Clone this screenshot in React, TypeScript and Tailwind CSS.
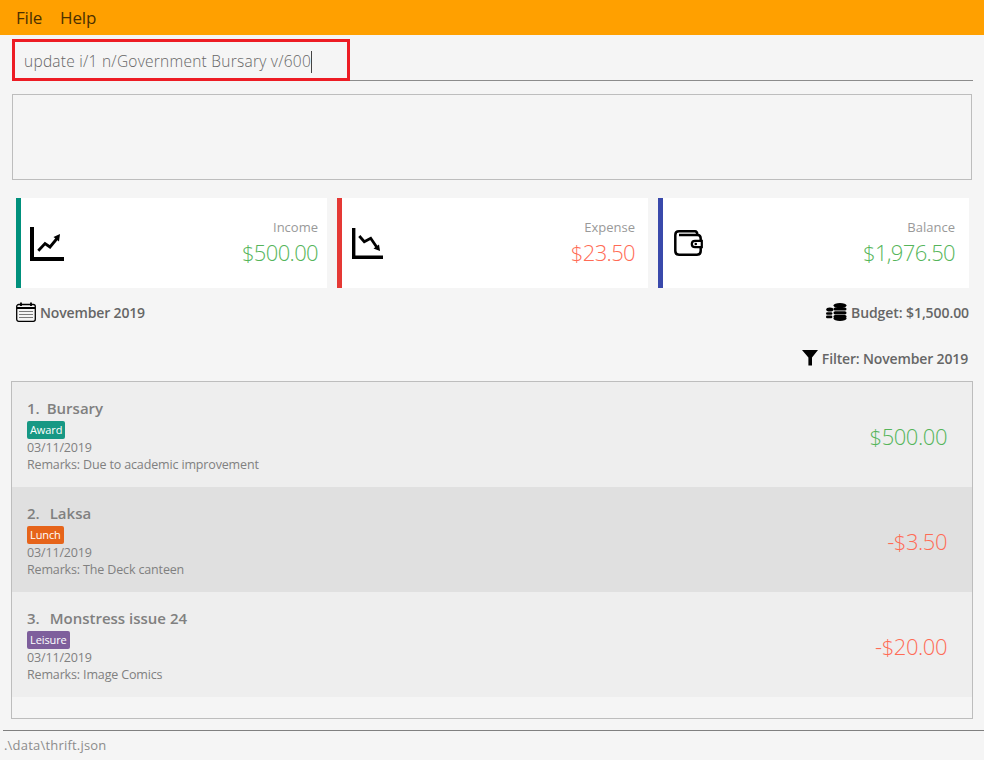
import React from "react";

const font = { fontFamily: '"Open Sans", "Noto Sans", sans-serif' };

function Up() {
  return (
    <svg width="34" height="34" viewBox="0 0 34 34" className="block">
      <path d="M2 0V32H34" fill="none" stroke="#000" strokeWidth="4" />
      <path d="M8.3 23.7L15 16.5L20 20L27 11.5" fill="none" stroke="#000" strokeWidth="2.8" />
      <path d="M23.5 10L30 7L29 14.5Z" fill="#000" />
    </svg>
  );
}
function Down() {
  return (
    <svg width="31" height="31" viewBox="0 0 31 31" className="block">
      <path d="M1.7 0V29.3H31" fill="none" stroke="#000" strokeWidth="3.4" />
      <path d="M7.3 8L12.3 13.7L18.7 10.3L25 19.5" fill="none" stroke="#000" strokeWidth="2.8" />
      <path d="M21.5 20.5L28 23L27 16.5Z" fill="#000" />
    </svg>
  );
}
function Wallet() {
  return (
    <svg width="29" height="26" viewBox="0 0 29 26" className="block">
      <path d="M5 1.3H21C22.5 1.3 23.3 2.5 23.5 5M5 1.3C2.5 1.3 1.3 3 1.3 5V21C1.3 23.5 2.5 24.7 5 24.7H23C25.5 24.7 26.7 23.5 26.7 21V8.5C26.7 6 25.5 5 23.5 5H5" fill="none" stroke="#000" strokeWidth="2.5" />
      <path d="M27.8 10.8H21C19 10.8 17.8 12.3 17.8 14S19 17.2 21 17.2H27.8Z" fill="#fff" stroke="#000" strokeWidth="2.2" />
      <circle cx="21.8" cy="14" r="1.3" fill="#000" />
    </svg>
  );
}
function Calendar() {
  return (
    <svg width="20" height="20" viewBox="0 0 20 20" className="block">
      <rect x="0.7" y="2.5" width="18.6" height="16.8" rx="2" fill="none" stroke="#000" strokeWidth="1.3" />
      <path d="M1 6H19" stroke="#000" strokeWidth="2" />
      <path d="M5 0.5V4M15 0.5V4" stroke="#000" strokeWidth="1.8" />
      <path d="M3.5 9.5H16.5M3.5 12.5H16.5M3.5 15.5H16.5" stroke="#000" strokeWidth="1" strokeDasharray="1 1" />
    </svg>
  );
}
function Coins() {
  return (
    <svg width="21" height="18" viewBox="0 0 21 18" className="block">
      <g fill="#000">
        <ellipse cx="14" cy="2.6" rx="6.5" ry="2.6" />
        <rect x="7.5" y="4.4" width="13" height="3.2" rx="1.6" />
        <rect x="7.5" y="8.2" width="13" height="3.2" rx="1.6" />
        <rect x="7.5" y="12" width="13" height="3" rx="1.5" />
        <ellipse cx="14" cy="15.4" rx="6.5" ry="2.6" />
        <ellipse cx="3.8" cy="6.4" rx="3.6" ry="2" />
        <rect x="0" y="9.2" width="6.4" height="2.6" rx="1.3" />
        <rect x="0" y="12.6" width="6.4" height="2.6" rx="1.3" />
      </g>
    </svg>
  );
}
function Funnel() {
  return (
    <svg width="16" height="16" viewBox="0 0 16 16" className="block">
      <path d="M0 0H16L10 7.5V15.5H6.4V7.5Z" fill="#000" />
    </svg>
  );
}

function Card({ border, pad, iconPad, icon, label, value, color }: { border: string; pad: string; iconPad: string; icon: React.ReactNode; label: string; value: string; color: string }) {
  return (
    <div className={`flex h-[90px] w-[311px] items-center justify-between border-l-[5px] bg-white ${border} ${pad}`}>
      <div className={iconPad}>{icon}</div>
      <div className="flex flex-col items-end">
        <div className="mb-[2px] text-[13px] leading-[16px] text-[#999999]">{label}</div>
        <div className={`text-[22px] font-light leading-[30px] tracking-[-0.65px] ${color}`}>{value}</div>
      </div>
    </div>
  );
}

function Item({ n, gap, name, tag, tagColor, remarks, value, color, bg }: { n: string; gap: string; name: string; tag: string; tagColor: string; remarks: string; value: string; color: string; bg: string }) {
  return (
    <div className={`flex h-[105px] items-center justify-between pl-[15px] pr-[25px] ${bg}`}>
      <div className="flex flex-col pt-[2px]">
        <div className="flex text-[15px] font-semibold leading-[20px] text-[#808080]">
          <span className={gap}>{n}.</span>
          <span>{name}</span>
        </div>
        <div className={`mt-[3px] self-start rounded-[2px] px-[3px] text-[11px] leading-[18px] tracking-[-0.1px] text-white ${tagColor}`}>{tag}</div>
        <div className="text-[12.5px] leading-[17px] tracking-[-0.15px] text-[#808080]">03/11/2019</div>
        <div className="text-[12.5px] leading-[17px] tracking-[-0.15px] text-[#808080]">{remarks}</div>
      </div>
      <div className={`pt-[4px] text-[22px] font-light tracking-[-0.45px] ${color}`}>{value}</div>
    </div>
  );
}

export default function App() {
  return (
    <div className="relative flex h-[760px] w-[984px] flex-col overflow-hidden bg-[#f5f5f5]" style={font}>
      <div className="flex h-[35px] items-center gap-[18px] bg-[#ffa000] pl-[16px] text-[17px] tracking-[-0.2px] text-[#4d3000]">
        <span>File</span>
        <span>Help</span>
      </div>

      <div className="mx-[12px] mr-[11px] flex h-[46px] items-center border-b border-[#8c8c8c] pl-[12px] pt-[8px]">
        <span className="text-[15.5px] font-light tracking-[0.25px] text-[#666666]">update i/1 n/Government Bursary v/600</span>
        <span className="h-[22px] w-px bg-[#444]" />
      </div>
      <div className="pointer-events-none absolute left-[12px] top-[39px] h-[42px] w-[338px] border-[3px] border-[#ed1c24]" />

      <div className="ml-[12px] mt-[13px] h-[86px] w-[960px] border border-[#bdbdbd]" />

      <div className="ml-[16px] mt-[18px] flex gap-[10px]">
        <Card border="border-[#00907c]" pad="pl-[9px] pr-[9px]" iconPad="pt-[1px]" icon={<Up />} label="Income" value="$500.00" color="text-[#55b55a]" />
        <Card border="border-[#e53935]" pad="pl-[10px] pr-[13px]" iconPad="pt-[1px]" icon={<Down />} label="Expense" value="$23.50" color="text-[#ff6b55]" />
        <Card border="border-[#3949ab]" pad="pl-[11px] pr-[14px]" iconPad="" icon={<Wallet />} label="Balance" value="$1,976.50" color="text-[#55b55a]" />
      </div>

      <div className="ml-[16px] mr-[15px] mt-[13px] flex h-[22px] items-center justify-between text-[14px] font-semibold tracking-[-0.15px] text-[#666666]">
        <div className="flex items-center gap-[4px]">
          <Calendar />
          <span>November 2019</span>
        </div>
        <div className="flex items-center gap-[4px]">
          <Coins />
          <span className="tracking-[-0.08px]">Budget: $1,500.00</span>
        </div>
      </div>

      <div className="mr-[16px] mt-[24px] flex h-[22px] items-center justify-end gap-[4px] text-[14px] font-semibold tracking-[-0.15px] text-[#666666]">
        <Funnel />
        <span>Filter: November 2019</span>
      </div>

      <div className="ml-[11px] mt-[12px] h-[338px] w-[962px] border border-[#bdbdbd]">
        <Item n="1" gap="mr-[7px]" name="Bursary" tag="Award" tagColor="bg-[#179884]" remarks="Remarks: Due to academic improvement" value="$500.00" color="text-[#55b55a]" bg="bg-[#eeeeee]" />
        <Item n="2" gap="mr-[10px]" name="Laksa" tag="Lunch" tagColor="bg-[#e6641a]" remarks="Remarks: The Deck canteen" value="-$3.50" color="text-[#ff6b55]" bg="bg-[#e0e0e0]" />
        <Item n="3" gap="mr-[10px]" name="Monstress issue 24" tag="Leisure" tagColor="bg-[#7e5f9c]" remarks="Remarks: Image Comics" value="-$20.00" color="text-[#ff6b55]" bg="bg-[#eeeeee]" />
      </div>

      <div className="ml-[3px] mt-[11px] flex h-[30px] items-center border-t border-[#808080] pl-[1px] text-[13px] tracking-[0.2px] text-[#8c8c8c]">
        .\data\thrift.json
      </div>
    </div>
  );
}
